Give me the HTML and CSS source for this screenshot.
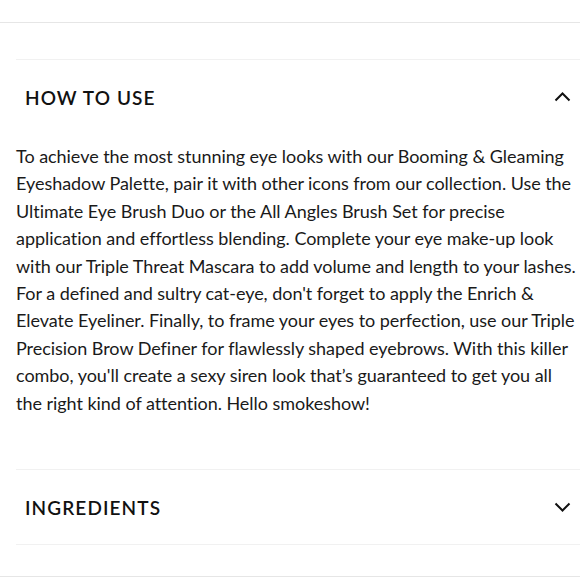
FILE: index.html
```html
<!DOCTYPE html>
<html lang="en">
<head>
<meta charset="utf-8">
<title>Product details</title>
<link rel="stylesheet" href="styles.css">
</head>
<body>
<div class="topbar"></div>
<div class="accordion">
  <section class="item open">
    <div class="item-head">
      <h3 class="item-title">HOW TO USE</h3>
      <svg class="chev" width="17" height="10" viewBox="0 0 17 10"><path d="M1.5 8.5 L8.5 1.5 L15.5 8.5" fill="none" stroke="#111" stroke-width="2"/></svg>
    </div>
    <div class="item-body">
      <p>To achieve the most stunning eye looks with our Booming &amp; Gleaming Eyeshadow Palette, pair it with other icons from our collection. Use the Ultimate Eye Brush Duo or the All Angles Brush Set for precise application and effortless blending. Complete your eye make-up look with our Triple Threat Mascara to add volume and length to your lashes. For a defined and sultry cat-eye, don't forget to apply the Enrich &amp; Elevate Eyeliner. Finally, to frame your eyes to perfection, use our Triple Precision Brow Definer for flawlessly shaped eyebrows. With this killer combo, you'll create a sexy siren look that’s guaranteed to get you all the right kind of attention. Hello smokeshow!</p>
    </div>
  </section>
  <section class="item">
    <div class="item-head">
      <h3 class="item-title">INGREDIENTS</h3>
      <svg class="chev" width="17" height="10" viewBox="0 0 17 10"><path d="M1.5 1.5 L8.5 8.5 L15.5 1.5" fill="none" stroke="#111" stroke-width="2"/></svg>
    </div>
  </section>
  <section class="item">
    <div class="item-head">
      <h3 class="item-title">SHIPPING &amp; RETURNS</h3>
      <svg class="chev" width="17" height="10" viewBox="0 0 17 10"><path d="M1.5 1.5 L8.5 8.5 L15.5 1.5" fill="none" stroke="#111" stroke-width="2"/></svg>
    </div>
  </section>
</div>
<div class="bottombar"></div>
</body>
</html>
```
FILE: styles.css
```css
html, body {
  margin: 0;
  padding: 0;
  background: #fff;
  overflow: hidden;
}
body {
  font-family: Lato, "Noto Sans", sans-serif;
  color: #111;
}
.topbar {
  height: 22px;
  border-bottom: 1px solid #e6e6e6;
}
.accordion {
  margin-top: 36px;
  margin-left: 16px;
  width: 564px;
}
.item {
  border-top: 1px solid #f1f1f1;
}
.item-head {
  height: 74px;
  display: flex;
  align-items: center;
  justify-content: space-between;
  padding: 0 9px 0 9px;
}
.item-title {
  margin: 0;
  font-family: Lato, sans-serif;
  font-size: 19px;
  font-weight: 600;
  letter-spacing: 1.1px;
  color: #111;
}
.chev {
  display: block;
}
.item-body {
  padding: 9px 0 52px 0;
}
.item-body p {
  margin: 0;
  font-size: 18px;
  letter-spacing: -0.04px;
  line-height: 27.4px;
  color: #1a1a1a;
}
.bottombar {
  position: fixed;
  left: 0;
  right: 0;
  bottom: 0;
  height: 2px;
  background: #fff;
  border-top: 1px solid #e6e6e6;
}
```
